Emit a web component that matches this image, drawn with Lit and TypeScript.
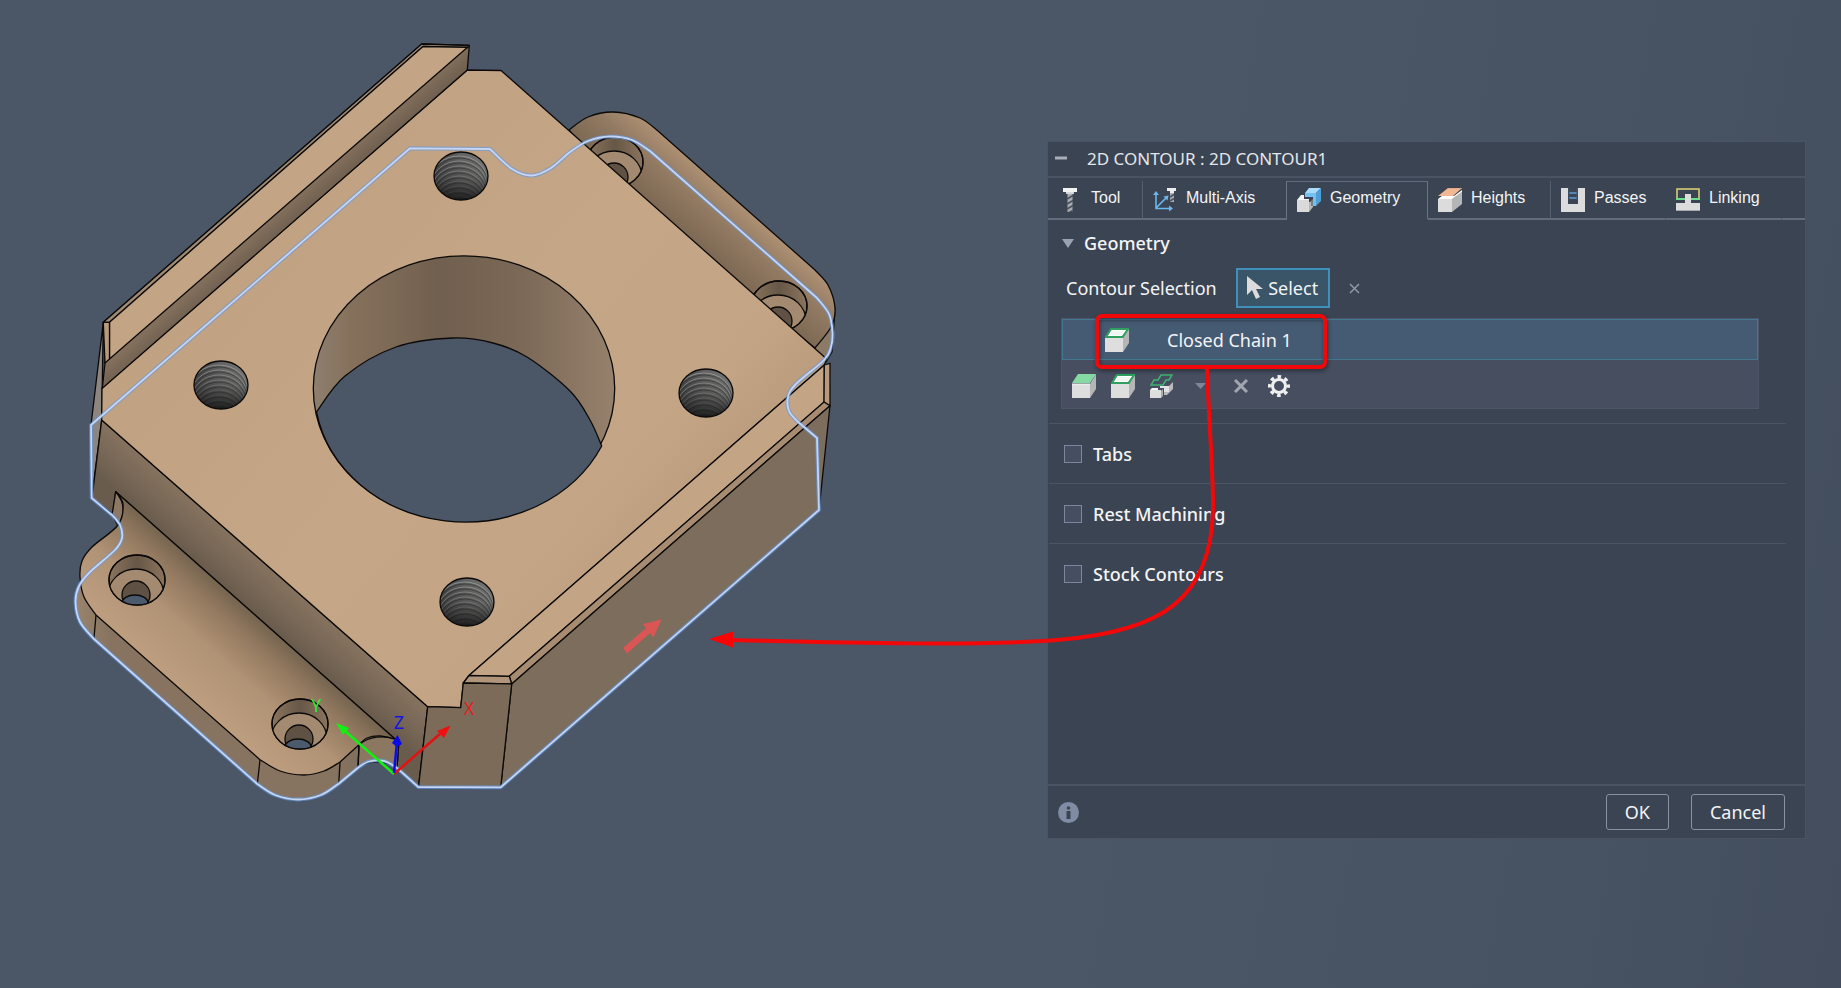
import { LitElement, html, svg, css } from "lit";
import { customElement, state } from "lit/decorators.js";

type Point = [number, number];

/** Smooth curve segments (Catmull-Rom) through the given points, without the initial move. */
function through(points: Point[]): string {
  let d = "";
  for (let i = 0; i < points.length - 1; i++) {
    const p0 = points[Math.max(i - 1, 0)];
    const p1 = points[i];
    const p2 = points[i + 1];
    const p3 = points[Math.min(i + 2, points.length - 1)];
    d += `C${p1[0] + (p2[0] - p0[0]) / 6} ${p1[1] + (p2[1] - p0[1]) / 6} ${p2[0] - (p3[0] - p1[0]) / 6} ${p2[1] - (p3[1] - p1[1]) / 6} ${p2[0]} ${p2[1]}`;
  }
  return d;
}

const CONTOUR =
  "M91 425L91.7 498L112 515" +
  through([[112, 515], [120, 525], [122, 538], [115, 550], [90, 572], [79, 586], [75.5, 602], [80, 622], [94, 639]]) +
  "L257.3 784" +
  through([[257.3, 784], [275, 795], [298, 799.5], [321, 795], [338.7, 783.7]]) +
  "L358 767.7" +
  through([[358, 767.7], [369, 761.5], [384, 761], [397, 768]]) +
  "L418.3 787L500.7 787.3L819 510L817 438L797 421" +
  through([[797, 421], [789, 411], [788, 397], [796, 384], [824, 360], [831, 347], [832.5, 332], [829, 314], [817, 298]]) +
  "L650 151" +
  through([[650, 151], [632, 140], [610, 136.5], [588, 141], [570, 152], [551, 168], [532, 175.5], [512, 169], [490, 149]]) +
  "L410 148.3Z";

const LEFT_FLANGE =
  "M115.7 491.7" +
  through([[115.7, 491.7], [123, 504], [118, 525], [92, 547], [82, 561], [80, 577], [84, 597], [96, 615]]) +
  "L260 759.7" +
  through([[260, 759.7], [280, 771], [304, 775], [324, 771], [340, 762]]) +
  "L359 744.7" +
  through([[359, 744.7], [367, 738], [380, 736], [395, 739]]) +
  "Z";

const RIGHT_FLANGE =
  "M569 130" +
  through([[569, 130], [588, 117], [613, 112], [640, 118], [658, 131]]) +
  "L815 270" +
  through([[815, 270], [828, 285], [835, 308], [831, 327], [815, 348]]) +
  "L630 200Z";

const BORE_FLOOR =
  "M316.5 412" +
  through([[316.5, 412], [345, 376], [396, 347], [453, 338], [493, 343], [527, 357], [570, 391], [590, 420], [601.7, 446]]) +
  "A151 133 0 0 1 316.5 412Z";

function threadedHole(x: number, y: number) {
  return svg`
    <g transform="translate(${x} ${y})">
      <ellipse rx="27" ry="24" fill="url(#thread)" stroke="none"></ellipse>
      <g clip-path="url(#thread-clip)" fill="none">
        ${[0, 1, 2, 3, 4, 5, 6, 7, 8].map(
          (i) => svg`
            <ellipse cx="-2" cy=${5 * i + 4} rx=${28 - i / 2} ry="24" stroke="#c9ccce" stroke-width="1" opacity=${0.6 - i * 0.05}></ellipse>
            <ellipse cx="-2" cy=${5 * i + 6} rx=${28 - i / 2} ry="24" stroke="#1c1c1c" stroke-width="1" opacity="0.45"></ellipse>`
        )}
        <rect x="-28" y="-25" width="56" height="50" fill="url(#thread-shade)" stroke="none"></rect>
      </g>
      <ellipse rx="27" ry="24" fill="none"></ellipse>
    </g>`;
}

function counterbore(x: number, y: number, open: boolean) {
  return svg`
    <g transform="translate(${x} ${y})">
      <ellipse rx="28" ry="25" fill="url(#bore-wall)"></ellipse>
      <g clip-path="url(#cbore-clip)">
        <ellipse cx="-1" cy="15" rx="28" ry="26" fill="#a38a70"></ellipse>
        <ellipse cx="-1" cy="15" rx="14" ry="14" fill="#5f5143"></ellipse>
        ${open ? svg`<ellipse cx="-2" cy="23" rx="13" ry="8" fill="#4b5a6c"></ellipse>` : ""}
      </g>
      <ellipse rx="28" ry="25" fill="none"></ellipse>
    </g>`;
}

const icons = {
  tool: svg`
    <path d="M9.500 5h5v19h-5z" fill="#a9acb0"/>
    <path d="M9 11l6-3.500M9 16l6-3.500M9 21l6-3.500M11 24.500l4-2" stroke="#4c535f" stroke-width="1.800"/>
    <path d="M5 0h14v4h-3v2H8V4H5z" fill="#f2f2f2"/><path d="M8 4h8v2H8z" fill="#d5d6d8"/>`,
  multiAxis: svg`
    <path d="M17 4h4v10h-4z" fill="#a9acb0"/><path d="M17 9l4-2.500M17 13l4-2.500" stroke="#4c535f" stroke-width="1.500"/>
    <path d="M14 0h9v3h-2v2h-4V3h-3z" fill="#ececec"/>
    <g stroke="#6cb8ee" stroke-width="1.600" fill="none"><path d="M3 21V6M2.200 20.500H16M3 20L13 10"/></g>
    <path d="M3 3l3 4H0zM20 20.500l-4 3v-6zM15.500 7.500l-1 5-4-4z" fill="#6cb8ee"/>`,
  geometry: svg`
    <path d="M12 0h12l-5 5H8z" fill="#a9dcfb"/><path d="M24 0v13l-5 5V5z" fill="#4d9fd6"/><path d="M8 5h11v13h-3V9H8z" fill="#74c0f1"/>
    <path d="M4 7h3v4h5v4l-1-3H0z" fill="#f4f4f4"/><path d="M0 12h12v12H0z" fill="#dadada"/>
    <path d="M12 14h1l3-3v8l-4 5z" fill="#b5b7b9"/><path d="M7 10h8v8" stroke="#3b4453" fill="none"/>`,
  heights: svg`
    <path d="M0 11h14v13H0z" fill="#dcdcdc"/><path d="M14 11L24 4v12l-10 8z" fill="#b4b5b6"/><path d="M4 8h12l8-6v2l-10 7H0z" fill="#fff"/>
    <path d="M10 0h14l-9 8H0z" fill="#f0b994"/><path d="M10 0h14" stroke="#d79a75"/>`,
  passes: svg`
    <path d="M0 0h7v16h10V0h7v24H0z" fill="#dcdcdc"/><path d="M8 5h8M8 10h8" stroke="#5b9dd9" stroke-width="1.500"/>
    <path d="M8 0v12M16 0v12" stroke="#40566e"/>`,
  linking: svg`
    <path d="M1 11V1h22v10" stroke="#e5d377" stroke-width="1.500" fill="none"/><path d="M0 11h9M15 11h9" stroke="#6bdc8a" stroke-width="2"/>
    <path d="M9 6h6v9h9v8H0v-8h9z" fill="#dcdcdc"/><path d="M0 22.500h24" stroke="#a7a9ab"/>`,
  face: svg`
    <path d="M0 10h18v14H0z" fill="#dedede"/><path d="M18 10L24 0v15l-6 9z" fill="#b3b5b6"/>
    <path d="M6 0h18l-6 9H0z" fill="#87d9a3"/><path d="M0 10h18" stroke="#f7f7f7"/>`,
  chain: svg`
    <path d="M0 10h18v14H0z" fill="#dedede"/><path d="M18 10L24 0v15l-6 9z" fill="#b3b5b6"/>
    <path d="M6 1h17l-5.500 8H1z" fill="#fff" stroke="#2fa05d" stroke-width="2"/><path d="M8 3h11l-3 4H5z" fill="#eef7f0"/>`,
  pocket: svg`
    <path d="M11 1h11l-3 5h-3l-3 5H1l3-5h4z" fill="none" stroke="#3fb371" stroke-width="1.500"/>
    <path d="M0 16h11v8H0z" fill="#dedede"/><path d="M0 16l2-2h6v2z" fill="#f5f5f5"/>
    <path d="M11 17l2-2v7l-2 2z" fill="#a9abad"/>
    <path d="M10 12h9v6h-5v-4h-4z" fill="#e3e3e3"/><path d="M14 18h5v-6l4-4v7l-6 6h-3z" fill="#b7b9ba"/>`,
  caret: svg`<path d="M0 0h11l-5.500 6z" fill="#7c8599"/>`,
};

const icon = (content: unknown, width = 24, height = 24) => html`
  <svg width=${width} height=${height} viewBox="0 0 ${width} ${height}" aria-hidden="true">${content}</svg>`;

@customElement("part-canvas")
export class PartCanvas extends LitElement {
  static styles = css`
    :host { display: block; }
    .scene { display: block; width: 100%; height: 100%; }
    .axis { font: 18px "Noto Sans", sans-serif; }
  `;

  render() {
    return html`
      <svg class="scene" viewBox="0 0 1841 988" role="img" aria-label="Bracket with selected contour">
        <defs>
          <linearGradient id="plate" gradientUnits="userSpaceOnUse" x1="180" y1="150" x2="740" y2="640">
            <stop offset="0" stop-color="#bb9b7d"/><stop offset=".12" stop-color="#c0a182"/><stop offset=".5" stop-color="#c5a686"/>
            <stop offset=".75" stop-color="#c3a484"/><stop offset=".87" stop-color="#b8997b"/><stop offset="1" stop-color="#bf9f81"/>
          </linearGradient>
          <linearGradient id="wall" gradientUnits="userSpaceOnUse" x1="267" y1="563" x2="237" y2="597">
            <stop offset="0" stop-color="#87735f"/><stop offset=".5" stop-color="#7a6958"/><stop offset="1" stop-color="#6a5c4d"/>
          </linearGradient>
          <linearGradient id="flange" gradientUnits="userSpaceOnUse" x1="255" y1="615" x2="182" y2="697">
            <stop offset="0" stop-color="#75644f"/><stop offset=".2" stop-color="#92795f"/><stop offset=".5" stop-color="#b09275"/><stop offset="1" stop-color="#bf9f80"/>
          </linearGradient>
          <linearGradient id="flange-back" gradientUnits="userSpaceOnUse" x1="690" y1="238" x2="738" y2="184">
            <stop offset="0" stop-color="#7d6954"/><stop offset=".45" stop-color="#927a62"/><stop offset="1" stop-color="#bc9c7d"/>
          </linearGradient>
          <linearGradient id="edge" gradientUnits="userSpaceOnUse" x1="75" x2="430" y1="0" y2="0">
            <stop offset="0" stop-color="#9a846d"/><stop offset=".1" stop-color="#87735f"/><stop offset=".7" stop-color="#877460"/><stop offset="1" stop-color="#77675a"/>
          </linearGradient>
          <linearGradient id="rail-side" gradientUnits="userSpaceOnUse" x1="275" y1="213" x2="291" y2="231">
            <stop offset="0" stop-color="#85715d"/><stop offset="1" stop-color="#6b5c4d"/>
          </linearGradient>
          <linearGradient id="bore" x1="0" x2="1">
            <stop offset="0" stop-color="#8e7f70"/><stop offset=".12" stop-color="#86715c"/><stop offset=".42" stop-color="#715f4f"/><stop offset=".7" stop-color="#7c6957"/><stop offset="1" stop-color="#96816c"/>
          </linearGradient>
          <linearGradient id="bore-wall" x1="0" x2="1"><stop offset="0" stop-color="#8a745d"/><stop offset=".5" stop-color="#675747"/><stop offset="1" stop-color="#8b745d"/></linearGradient>
          <linearGradient id="thread" x1="0" x2="1"><stop offset="0" stop-color="#4b4b4b"/><stop offset="1" stop-color="#8a8a88"/></linearGradient>
          <linearGradient id="thread-shade" x1="0" x2="0" y1="0" y2="1">
            <stop offset="0" stop-color="#222" stop-opacity=".1"/><stop offset=".5" stop-color="#222" stop-opacity=".3"/><stop offset="1" stop-color="#111" stop-opacity=".9"/>
          </linearGradient>
          <clipPath id="thread-clip"><ellipse rx="27" ry="24"></ellipse></clipPath>
          <clipPath id="cbore-clip"><ellipse rx="28" ry="25"></ellipse></clipPath>
          <clipPath id="lower-left"><rect x="60" y="495" width="370" height="310"></rect></clipPath>
        </defs>

        <g stroke="#0b0a09" stroke-width="1.3" stroke-linejoin="round">
          <path d="M835 308L832 352L826 362L812 348Z" fill="#8c7966"/>
          <path d=${RIGHT_FLANGE} fill="url(#flange-back)"/>
          ${counterbore(615, 162, false)}
          ${counterbore(779, 306, false)}

          <path d=${CONTOUR} fill="url(#edge)" stroke="none" clip-path="url(#lower-left)"/>
          <path d="M103.300 322.300L91 425L91.700 498L101.700 420Z" fill="#8d8680"/>
          <path d="M101.700 420L427.700 706.700L418.500 787L397 768L399 740L395 739L115.700 491.700L113 514L92 498Z" fill="url(#wall)"/>
          <path d="M359 744.700C368 737 384 734 399 740L397 768C386 760 368 760 358 768Z" fill="#8c7761"/>
          <path d="M115.700 491.700C126 504 125 515 118 526L112 515Z" fill="#8c7864"/>
          <path d=${LEFT_FLANGE} fill="url(#flange)"/>
          <path d="M96 615L94 638M260 760L257.300 784M340 762L338.700 784M359 745L358 768" fill="none"/>
          ${counterbore(137, 580, true)}
          ${counterbore(300, 724, true)}

          <path d="M102 388L467.300 70L501 70.500L826.700 359L824.300 365L469 675.500L463.300 683L460.700 707.700L427.700 706.700L101.700 420Z" fill="url(#plate)"/>
          <path d="M421.700 44L469.300 45.500L467.300 70L102.300 388.300L105 363L103.300 322.300Z" fill="url(#rail-side)"/>
          <path d="M421.700 44L469.300 45.500L467.500 47.500L423 46.500L109.500 322.300H103.300Z" fill="#a08973"/>
          <path d="M423 46.500L467.500 47.300L109.500 359V322.300Z" fill="#c3a485"/>
          <path d="M103.300 322.300H109.500V359L105 363Z" fill="#b89a7d"/>

          <path d="M469 675.500L824.300 365V402L509.300 676.300Z" fill="#c3a485"/>
          <path d="M824.300 365L830 363.300V405.700L824 402Z" fill="#b89a7d"/>
          <path d="M509.300 676.300L824 402L830 405.700L511.700 684Z" fill="#a88c72"/>
          <path d="M463.300 683L469 675.500L509.300 676.300L511.700 684Z" fill="#b1957a"/>
          <path d="M511.700 684L830 405.700L819 510L500.700 787.300Z" fill="#7d6d5d"/>
          <path d="M427.700 706.700L460.700 707.700L463.300 683L511.700 684L500.700 787.300H418.500Z" fill="#7d6b5a"/>

          <ellipse cx="464" cy="388.500" rx="150.700" ry="132.700" fill="url(#bore)"/>
          <path d=${BORE_FLOOR} fill="#4b5667"/>
          ${threadedHole(461, 176)}
          ${threadedHole(221, 385)}
          ${threadedHole(706, 393)}
          ${threadedHole(467, 602)}
        </g>

        <g fill="none" stroke-linejoin="round">
          <path d=${CONTOUR} stroke="#5f9ae8" stroke-width="4" opacity=".6"/>
          <path d=${CONTOUR} stroke="#c6d5f2" stroke-width="1.800"/>
        </g>

        <path d="M623 648L646 628L643 624L661.500 619.500L653.500 637.500L650 633L627 653.500Z" fill="#d95654"/>

        <g stroke-width="2.500">
          <path d="M394 774L441 733" stroke="#e31212"/><path d="M450.500 725.500L444 738L437 731Z" fill="#f01010"/>
          <path d="M394 774L345 731" stroke="#12f012"/><path d="M336 723L349 728L343 735Z" fill="#12f012"/>
          <path d="M394 773L397 742" stroke="#0b0bea"/><path d="M397.500 735L402 744L397 747L392 743Z" fill="#0b0bea"/>
        </g>
        <g class="axis" text-anchor="middle">
          <text x="469" y="715" fill="#e32020">X</text>
          <text x="316" y="712" fill="#35e835">Y</text>
          <text x="399" y="729" fill="#1515e0">Z</text>
        </g>
      </svg>`;
  }
}

@customElement("contour-dialog")
export class ContourDialog extends LitElement {
  @state() private tab = "Geometry";

  private tabs = [
    { name: "Tool", icon: icons.tool },
    { name: "Multi-Axis", icon: icons.multiAxis },
    { name: "Geometry", icon: icons.geometry },
    { name: "Heights", icon: icons.heights },
    { name: "Passes", icon: icons.passes },
    { name: "Linking", icon: icons.linking },
  ];

  static styles = css`
    :host {
      display: flex;
      flex-direction: column;
      box-sizing: border-box;
      min-height: 698px;
      border: 1px solid #4a5363;
      background: #3b4452;
      color: #f3f4f6;
      font: 18px/24px "Noto Sans", sans-serif;
    }
    * { box-sizing: border-box; }
    button { margin: 0; padding: 0; border: 0; background: none; color: inherit; font: inherit; display: flex; align-items: center; }
    svg { display: block; flex: none; }
    .title { display: flex; align-items: center; gap: 20px; height: 36px; padding-left: 7px; border-bottom: 2px solid #4a5363; color: #e4e6ea; }
    .title h1 { margin: 0; font: 17px/24px "Noto Sans", sans-serif; }
    .tabs { display: grid; grid-template-columns: 95px 144px 141px 123px 115px 116px 1fr; height: 42px; padding-top: 3px; }
    .tab { gap: 9px; padding: 0 0 4px 10px; border-bottom: 2px solid #626c7d; border-right: 1px solid #566071; font: 16px/20px "Liberation Sans", sans-serif; white-space: nowrap; }
    .tab.before { border-right-color: #6b7585; }
    .tab.active { border-top: 1px solid #626c7d; border-bottom-color: transparent; border-right-color: #6b7585; }
    .tab.faint { border-right-color: transparent; }
    .filler { border-bottom: 2px solid #626c7d; }
    .tab svg { margin-top: 4px; }
    .body { flex: 1; padding: 0 19px 0 1px; }
    .heading { gap: 10px; height: 24px; margin: 11px 0 0 13px; font-weight: 500; }
    .row { display: flex; align-items: center; height: 40px; margin: 13px 0 10px 17px; }
    .select { justify-content: center; gap: 5px; width: 94px; height: 40px; margin: 0 19px 0 19px; border: 2px solid #3f91bb; background: #3a5468; }
    .list { margin: 0 27px 14px 12px; border: 1px solid #4d5668; background: #464e60; }
    .chain { width: 100%; height: 41px; padding-left: 42px; gap: 38px; border: 1px solid #417790; background: #455b73; }
    .tools { display: flex; align-items: center; height: 48px; padding: 3px 0 0 10px; }
    .face { margin-right: 15px; }
    .caret { margin: 0 28px 0 6px; }
    .remove { margin-right: 20px; }
    .option { display: flex; align-items: center; gap: 11px; height: 60px; padding-left: 15px; border-top: 1px solid #4b5565; font-weight: 500; }
    .option input { appearance: none; width: 18px; height: 18px; margin: 0; border: 1px solid #7c879b; background: #464f61; }
    .option input:checked { background: #45a0cf; }
    footer { display: flex; align-items: center; height: 54px; gap: 22px; padding: 0 20px 0 10px; border-top: 2px solid #4a5363; }
    .info { margin-right: auto; }
    .action { justify-content: center; height: 36px; padding: 0 18px; border: 1px solid #8792a5; border-radius: 3px; }
  `;

  private tabClass(name: string, i: number): string {
    const active = this.tabs.findIndex((t) => t.name === this.tab);
    return ["tab", i === active ? "active" : "", i === active - 1 ? "before" : "", i > active + 1 ? "faint" : ""].join(" ");
  }

  render() {
    return html`
      <header class="title">
        <button aria-label="Collapse">${icon(svg`<path d="M0 3h12" stroke="#a9afba" stroke-width="3"/>`, 12, 8)}</button>
        <h1>2D CONTOUR : 2D CONTOUR1</h1>
      </header>
      <nav class="tabs" role="tablist">
        ${this.tabs.map((t, i) => html`
          <button class=${this.tabClass(t.name, i)} role="tab" aria-selected=${t.name === this.tab} @click=${() => (this.tab = t.name)}>
            ${icon(t.icon)}${t.name}
          </button>`)}
        <span class="filler"></span>
      </nav>
      <section class="body">
        <button class="heading" aria-expanded="true">${icon(svg`<path d="M0 0h12L6 9z" fill="#9aa1b0"/>`, 12, 9)}Geometry</button>
        <div class="row">
          <span>Contour Selection</span>
          <button class="select">${icon(svg`<path d="M0 0v19l5-5 4 9 4-2-4-8h7z" fill="#dcdcdc"/>`, 16, 24)}Select</button>
          <button aria-label="Clear selection">${icon(svg`<path d="M1 1l9 9M10 1l-9 9" stroke="#9198a5" stroke-width="1.500"/>`, 11, 11)}</button>
        </div>
        <div class="list">
          <button class="chain">${icon(icons.chain)}Closed Chain 1</button>
          <div class="tools">
            <button class="face" aria-label="Face contour">${icon(icons.face)}</button>
            <button class="face" aria-label="Closed chain">${icon(icons.chain)}</button>
            <button class="face" aria-label="Pocket">${icon(icons.pocket)}</button>
            <button class="caret" aria-label="More">${icon(icons.caret, 11, 6)}</button>
            <button class="remove" aria-label="Remove">${icon(svg`<path d="M1 1l12 12M13 1L1 13" stroke="#a1a6b1" stroke-width="3"/>`, 14, 14)}</button>
            <button aria-label="Settings">${icon(svg`
              <circle cx="11" cy="11" r="6.500" fill="none" stroke="#efefef" stroke-width="3"/>
              <circle cx="11" cy="11" r="9.300" fill="none" stroke="#efefef" stroke-width="3.400" stroke-dasharray="3.600 3.704" stroke-dashoffset="1.800"/>`, 22, 22)}</button>
          </div>
        </div>
        ${["Tabs", "Rest Machining", "Stock Contours"].map((name) => html`
          <label class="option"><input type="checkbox" />${name}</label>`)}
      </section>
      <footer>
        <button class="info" aria-label="Information">${icon(svg`
          <circle cx="10.500" cy="10.500" r="10.500" fill="#7f8ca3"/><circle cx="10.500" cy="6" r="1.800" fill="#3b4452"/><path d="M8.500 9h4v8h-4z" fill="#3b4452"/>`, 21, 21)}</button>
        <button class="action">OK</button>
        <button class="action">Cancel</button>
      </footer>`;
  }
}

@customElement("app-root")
export class AppRoot extends LitElement {
  static styles = css`
    :host {
      display: flex;
      justify-content: flex-end;
      align-items: flex-start;
      position: relative;
      box-sizing: border-box;
      min-height: 100vh;
      padding: 141px 35px 0 0;
      overflow: hidden;
      background: linear-gradient(100deg, #4b5667 0%, #4b5667 60%, #475263 85%, #434d5e 100%);
    }
    .canvas, .callout { position: absolute; inset: 0; width: 100%; height: 100%; pointer-events: none; }
    .dialog { position: relative; width: 759px; max-width: 100%; }
    .frame { filter: drop-shadow(1px 2px 2px rgba(0, 0, 0, 0.45)); }
  `;

  render() {
    return html`
      <part-canvas class="canvas"></part-canvas>
      <contour-dialog class="dialog"></contour-dialog>
      <svg class="callout" viewBox="0 0 1841 988" aria-hidden="true">
        <g fill="none" stroke="#f20808" stroke-width="4">
          <rect class="frame" x="1097" y="316" width="228" height="51" rx="5"/>
          <path d="M1207 368C1209 425 1213 470 1213 505C1213 600 1160 632 1057 640C980 646 850 643 730 640"/>
        </g>
        <path d="M709 639L733 631.500V647.500Z" fill="#fa0404"/>
      </svg>`;
  }
}
